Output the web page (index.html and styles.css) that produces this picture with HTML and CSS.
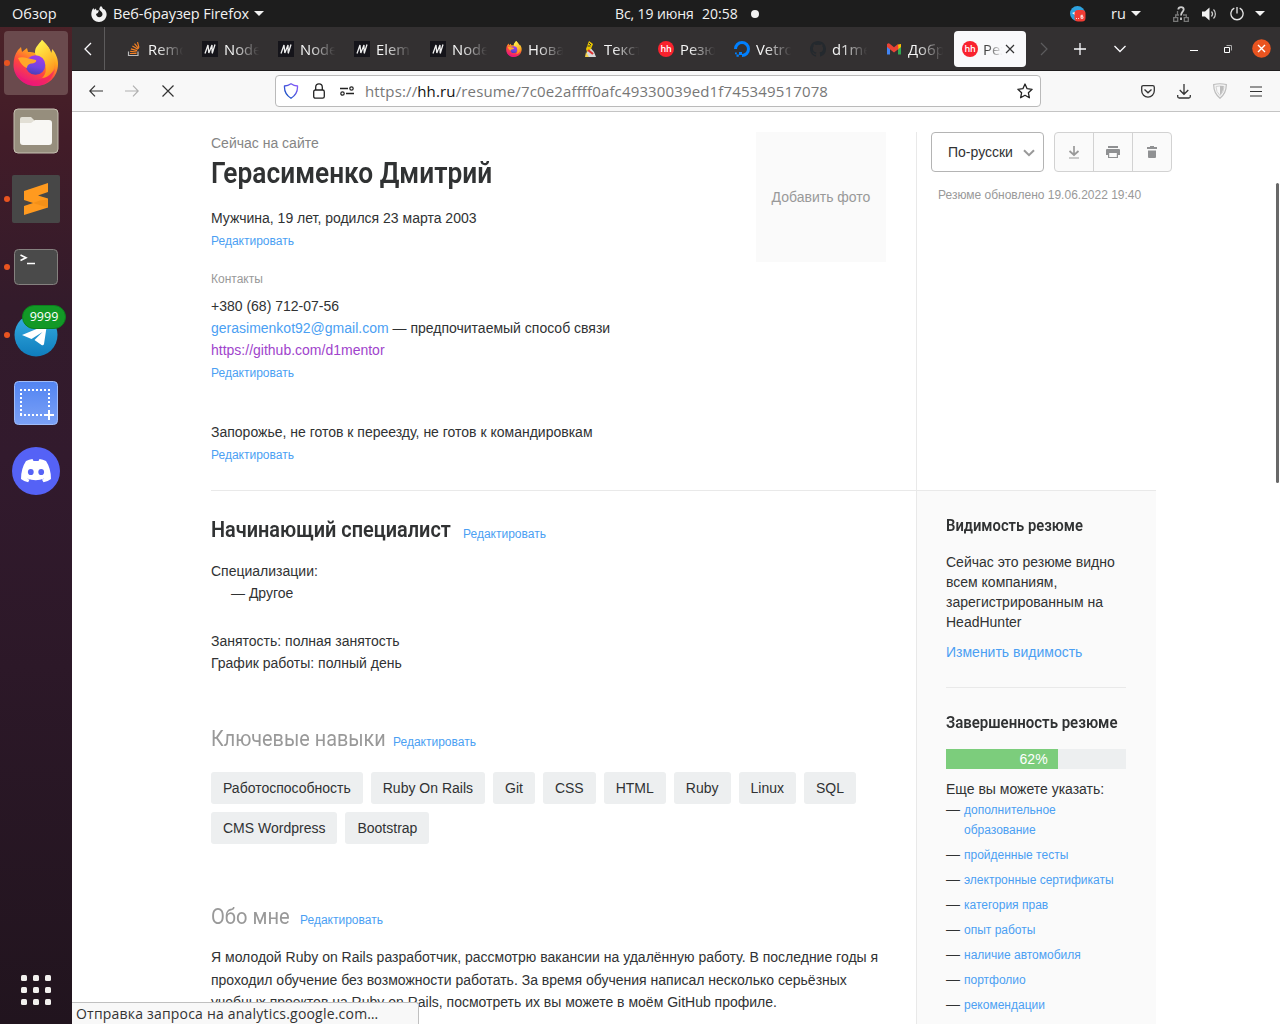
FILE: index.html
```html
<!DOCTYPE html>
<html lang="ru">
<head>
<meta charset="utf-8">
<title>Герасименко Дмитрий</title>
<link rel="stylesheet" href="styles.css">
</head>
<body>
<svg width="0" height="0" class="defs">
  <defs>
    <linearGradient id="fxBody" x1="0.8" y1="0" x2="0.3" y2="1"><stop offset="0" stop-color="#fff44f"/><stop offset="0.35" stop-color="#ffa61e"/><stop offset="0.65" stop-color="#ff4540"/><stop offset="1" stop-color="#e3128a"/></linearGradient>
    <linearGradient id="fxTail" x1="0.3" y1="0" x2="0.7" y2="1"><stop offset="0" stop-color="#fff44f"/><stop offset="0.5" stop-color="#ffc531"/><stop offset="1" stop-color="#ff8a1c"/></linearGradient>
    <linearGradient id="fxGlobe" x1="0.6" y1="0" x2="0.4" y2="1"><stop offset="0" stop-color="#a63be8"/><stop offset="0.6" stop-color="#7244e0"/><stop offset="1" stop-color="#4a3fb5"/></linearGradient>
    <linearGradient id="tgFill" x1="0" y1="0" x2="0" y2="1"><stop offset="0" stop-color="#37aee2"/><stop offset="1" stop-color="#0f7dbd"/></linearGradient>
    <linearGradient id="shotFill" x1="0" y1="0" x2="0" y2="1"><stop offset="0" stop-color="#5284f2"/><stop offset="1" stop-color="#7ba1f6"/></linearGradient>
    <linearGradient id="shieldLine" x1="1" y1="0" x2="0" y2="1"><stop offset="0" stop-color="#9059ff"/><stop offset="1" stop-color="#0250bb"/></linearGradient>
    <symbol id="firefox" viewBox="0 0 46 46">
      <path d="M29 0c5 5 8 8 9 13 1-2 1-3 1-4 4 4 6 10 6 15C45 37 35 46 23 46S.5 37 .5 25C.5 19 2 14 5 10l3-3 1 5 5-4 1 4c3 0 5 .3 7 1z" fill="url(#fxBody)"/>
      <path d="M29 0c4 4 8 8 9 13 3 5 4 10 3 15-2 7-8 10-12 10 5-4 5-12 1-17-3-3-8-4-8-9 0-5 4-8 7-12z" fill="url(#fxTail)"/>
      <circle cx="22.500" cy="25" r="9.800" fill="url(#fxGlobe)"/>
      <path d="M5 18c4-2 9 0 18 2 1 2-2 3.500-5 3.500-3 1-4 2-4 4.500C9 26 7 22 5 18z" fill="#ffa72a"/>
      <path d="M2 31c5 8 14 11 22 9 8-1 14-5 18-11-2 9-9 17-19 17C13 46 5 40 2 31z" fill="#ee1573" opacity=".55"/>
    </symbol>
    <symbol id="mdn" viewBox="0 0 16 16"><path d="M0 0h16v16H0z" fill="#15141a"/><path d="M3 12.500L6 4l.8 8L10 4l.2 8M10.200 12.500L13 3.500" fill="none" stroke="#eee" stroke-width="1.300"/></symbol>
    <symbol id="caret" viewBox="0 0 10 5"><path d="M0 0h10L5 5z" fill="#f2f2f2"/></symbol>
  </defs>
</svg>

<header class="topbar">
  <span class="topbar-item overview"><span class="fit">Обзор</span></span>
  <span class="topbar-item app-menu">
    <svg width="16" height="16" viewBox="0 0 16 16"><path d="M10 0c1 1 1.800 2 2 3l1.300.3C15 5 15.800 7 15.600 9c-.5 4-3.600 7-7.600 7S.500 13 .300 8.500C.300 6 1 3.500 2.500 2l.5 1.800L5 2.600l.3 1.700 2.700.2L6.800 7 5 8c.2 2 1.500 3.200 3.200 3.200 2 0 3.400-1.500 3.300-3.300C11.300 6 9 5 8.300 3.500 8.300 2 9 .800 10 0z" fill="#f2f2f2"/></svg>
    <span class="fit">Веб-браузер Firefox</span>
    <svg width="10" height="5"><use href="#caret"/></svg>
  </span>
  <span class="topbar-item clock"><span class="date">Вс, 19 июня</span><span>20:58</span><i class="notify"></i></span>
  <span class="topbar-item status">
    <svg class="tray-tg" width="16" height="16" viewBox="0 0 16 16"><circle cx="7.500" cy="7.500" r="7.500" fill="#2ea2de"/><path d="M2 7l3-1v3z" fill="#fff"/><rect x="4.500" y="4" width="11" height="11.500" rx="3.500" fill="#f23c34"/><path d="M6 12.500h1m1 0h1" stroke="#fff" stroke-width=".8"/><path d="M13 9.300h-2v3h2v-1.700h-2" fill="none" stroke="#fff" stroke-width=".8"/></svg>
    <span class="lang">ru</span>
    <svg class="lang-caret" width="10" height="5"><use href="#caret"/></svg>
    <svg class="net" width="16" height="16" viewBox="0 0 16 16"><path d="M.700 11.700h4v3.600h-4zM11.300 11.700h4v3.600h-4zM4.500 5v3.500M2.700 11V9H6M10 9h3.300v2" fill="none" stroke="#777" stroke-width="1.300"/><path d="M5.300 3.500C5.500.300 10.700.300 10.700 3.500 10.700 5.500 8 6 8 9.500M8 11.500v2.500" fill="none" stroke="#ccc" stroke-width="1.800"/></svg>
    <svg class="vol" width="16" height="14" viewBox="0 0 16 14"><path d="M0 4.500h3L7.500.500v13L3 9.500H0z" fill="#f2f2f2"/><path d="M9.500 4.500c1.300 1.500 1.300 3.500 0 5M11.500 2.500c2.500 2.500 2.500 6.500 0 9" fill="none" stroke="#ccc" stroke-width="1.200"/></svg>
    <svg class="power" width="14" height="14" viewBox="0 0 14 14"><path d="M4.300 1.200a6.100 6.100 0 1 0 5.400 0M7 0v6.500" fill="none" stroke="#e8e8e8" stroke-width="1.300"/></svg>
    <svg width="10" height="5"><use href="#caret"/></svg>
  </span>
</header>

<div class="desktop">
  <nav class="dock">
    <div class="dock-item current"><i class="dot"></i><svg width="46" height="46"><use href="#firefox"/></svg></div>
    <div class="dock-item"><svg width="46" height="46" viewBox="0 0 46 46"><rect x="1" y="1" width="44" height="44" rx="4" fill="#968e7d" stroke="#c6c0b2"/><path d="M7 14v-3q0-2 2-2h9l4 4v6H7z" fill="#e2dfd5"/><path d="M7 15h11l4-3h14q3 0 3 3v19q0 3-3 3H10q-3 0-3-3z" fill="#f8f7f4"/></svg></div>
    <div class="dock-item"><i class="dot"></i><svg width="48" height="48" viewBox="0 0 48 48"><rect width="48" height="48" rx="2" fill="#474747"/><path d="M12 16l24-8v9l-10 3.500L36 23.500v9L12 40v-9l9-3-9-3z" fill="#ff9a1f"/><path d="M21 28l7-2.500 8 -1v8z" fill="#e98512" opacity=".5"/></svg></div>
    <div class="dock-item"><i class="dot"></i><svg width="44" height="36" viewBox="0 0 44 36"><rect x=".5" y=".5" width="43" height="35" rx="4" fill="#4a4a4a" stroke="#85817f"/><path d="M6.500 6l5.500 2.800L6.500 11.500M13 14.500h8" fill="none" stroke="#fff" stroke-width="1.600"/></svg></div>
    <div class="dock-item"><i class="dot"></i><svg width="44" height="44" viewBox="0 0 44 44"><circle cx="22" cy="22" r="21.500" fill="url(#tgFill)"/><path d="M8 22L31 12.500q2-.5 1.500 2L30 31q-.6 2-2.500 1l-7-5 8-8-11 7z" fill="#fff"/></svg><b class="badge">9999</b></div>
    <div class="dock-item"><svg width="44" height="44" viewBox="0 0 44 44"><rect x=".5" y=".5" width="43" height="43" rx="4" fill="url(#shotFill)" stroke="#9fbcfa"/><path d="M6 9h30M6 34h22" fill="none" stroke="#fff" stroke-width="2" stroke-dasharray="2 2"/><path d="M7 12v22M35 8v20" fill="none" stroke="#fff" stroke-width="2" stroke-dasharray="2 2"/><path d="M35 29v10M30 34h10" stroke="#fff" stroke-width="2"/></svg></div>
    <div class="dock-item"><svg width="48" height="48" viewBox="0 0 48 48"><circle cx="24" cy="24" r="24" fill="#5562f6"/><path d="M14 14q3-1.500 6.500-2l1 2h5l1-2q3.500.5 6.500 2 5 7.500 5 18-3 2.500-7.500 3.200l-1.600-2.600q1.300-.4 2.400-1.200-8.600 3.600-17.200 0 1.100.8 2.400 1.200L16.200 35.200Q12 34.500 9 32 9 21.500 14 14z" fill="#fff"/><ellipse cx="18.800" cy="25" rx="2.900" ry="3.100" fill="#5562f6"/><ellipse cx="29.200" cy="25" rx="2.900" ry="3.100" fill="#5562f6"/></svg></div>
    <div class="apps"><i></i><i></i><i></i><i></i><i></i><i></i><i></i><i></i><i></i></div>
  </nav>

  <main class="browser">
    <div class="tabs">
      <div class="scroll-left"><svg width="8" height="14" viewBox="0 0 8 14"><path d="M7 1L1 7l6 6" fill="none" stroke="#fbfbfe" stroke-width="1.300"/></svg></div>
      <div class="tab"><svg width="16" height="16" viewBox="0 0 16 16"><path d="M2.500 10.500V14.500H12V10.500" fill="none" stroke="#bcbbbb" stroke-width="1.200"/><path d="M4 12.500h6.500M4.200 10.300l6.400.7M4.900 7.800l6.200 1.800M6.400 5l5.500 3.300M8.500 2.700l4.200 5M11.500 1.200l1.500 5.500" stroke="#f48024" stroke-width="1.200"/></svg><span>Remo</span></div>
      <div class="tab"><svg width="16" height="16"><use href="#mdn"/></svg><span>Node</span></div>
      <div class="tab"><svg width="16" height="16"><use href="#mdn"/></svg><span>Node</span></div>
      <div class="tab"><svg width="16" height="16"><use href="#mdn"/></svg><span>Elem</span></div>
      <div class="tab"><svg width="16" height="16"><use href="#mdn"/></svg><span>Node</span></div>
      <div class="tab"><svg width="16" height="16"><use href="#firefox"/></svg><span>Нова</span></div>
      <div class="tab"><svg width="16" height="16" viewBox="0 0 16 16"><path d="M7 5l5 6 2 5H4l1-6z" fill="#d8d8d8"/><path d="M7 0l4 3-2 5-4 3-1-3z" fill="#e8c500"/><path d="M7 2l2 2M5.500 5h3" stroke="#333"/><path d="M6 9l5 4" stroke="#d33" stroke-width="2.200"/><path d="M4 11l3 5H3z" fill="#f3d24a"/></svg><span>Текст</span></div>
      <div class="tab"><i class="hh">hh</i><span>Резю</span></div>
      <div class="tab"><svg width="16" height="16" viewBox="0 0 16 16"><path d="M1.500 8a6.500 6.500 0 1 1 6.500 6.500" fill="none" stroke="#0080ff" stroke-width="3"/><path d="M5 11h3v3H5zM2.500 13.500h2.300v2.300H2.500zM1 11.500h1.800v1.800H1z" fill="#0080ff"/></svg><span>Vetro</span></div>
      <div class="tab"><svg width="16" height="16" viewBox="0 0 16 16"><path d="M8 0C3.580 0 0 3.580 0 8c0 3.540 2.290 6.530 5.470 7.590.4.070.55-.17.55-.38v-1.490c-2.230.48-2.700-1.070-2.700-1.070-.36-.92-.89-1.170-.89-1.170-.73-.5.060-.49.060-.49.800.060 1.230.83 1.230.83.72 1.220 1.870.87 2.330.66.070-.52.280-.87.500-1.070-1.780-.2-3.640-.89-3.640-3.950 0-.87.310-1.590.82-2.150-.08-.2-.36-1.020.08-2.120 0 0 .67-.21 2.200.82a7.600 7.600 0 0 1 4 0c1.530-1.040 2.200-.82 2.200-.82.44 1.100.16 1.920.08 2.120.51.560.82 1.270.82 2.150 0 3.070-1.870 3.750-3.650 3.950.29.250.54.730.54 1.480v2.200c0 .21.150.46.550.38A8 8 0 0 0 16 8c0-4.420-3.580-8-8-8z" fill="#24292e"/></svg><span>d1me</span></div>
      <div class="tab"><svg width="16" height="16" viewBox="0 0 16 16"><path d="M1 3v10.500h3V7z" fill="#4285f4"/><path d="M15 3v10.500h-3V7z" fill="#34a853"/><path d="M12 3.500L15 3v3l-3 2.500z" fill="#fbbc04"/><path d="M1 3.200Q2.500 1.500 4 3l4 3.200L12 3l.5 5L8 11.500 1 6z" fill="#ea4335"/></svg><span>Добро</span></div>
      <div class="tab active"><i class="hh">hh</i><span>Резю</span><svg class="close" width="10" height="10" viewBox="0 0 10 10"><path d="M1 1l8 8M9 1L1 9" stroke="#333" stroke-width="1.200"/></svg></div>
      <div class="tab-tools">
        <svg width="8" height="14" viewBox="0 0 8 14"><path d="M1 1l6 6-6 6" fill="none" stroke="#5d5c5e" stroke-width="1.200"/></svg>
        <svg width="12" height="12" viewBox="0 0 12 12"><path d="M6 0v12M0 6h12" stroke="#fbfbfe" stroke-width="1.300"/></svg>
        <svg width="12" height="8" viewBox="0 0 12 8"><path d="M.500 1L6 6.500 11.500 1" fill="none" stroke="#fbfbfe" stroke-width="1.300"/></svg>
        <svg class="min" width="8" height="6" viewBox="0 0 8 6"><path d="M0 4.500h8" stroke="#fff"/></svg>
        <svg class="restore" width="8" height="8" viewBox="0 0 8 8"><path d="M.500 2.500h5v5h-5z" fill="none" stroke="#fff"/><path d="M2.500.500h5v5" fill="none" stroke="#aaa"/></svg>
        <svg class="quit" width="19" height="19" viewBox="0 0 19 19"><circle cx="9.500" cy="9.500" r="9.300" fill="#e95420"/><path d="M6 6l7 7M13 6l-7 7" stroke="#fff" stroke-width="1.400"/></svg>
      </div>
    </div>

    <div class="toolbar">
      <div class="nav-buttons">
        <svg width="14" height="12" viewBox="0 0 14 12"><path d="M14 6H1M6 .700L.800 6 6 11.300" fill="none" stroke="#333" stroke-width="1.200"/></svg>
        <svg width="14" height="12" viewBox="0 0 14 12"><path d="M0 6h13M8 .700L13.200 6 8 11.300" fill="none" stroke="#b0b0b0" stroke-width="1.200"/></svg>
        <svg class="stop" width="12" height="12" viewBox="0 0 12 12"><path d="M.500.500l11 11M11.500.500l-11 11" stroke="#333" stroke-width="1.200"/></svg>
      </div>
      <div class="urlbar">
        <svg width="16" height="16" viewBox="0 0 16 16"><path d="M8 .800q3 2 6.500 2.200Q15 11 8 15.300 1 11 1.500 3 5 2.800 8 .800z" fill="none" stroke="url(#shieldLine)" stroke-width="1.300"/></svg>
        <svg width="12" height="16" viewBox="0 0 12 16"><rect x=".7" y="7" width="10.600" height="8.200" rx="1.700" fill="none" stroke="#222" stroke-width="1.300"/><path d="M2.700 7V4.200q0-3.300 3.300-3.300t3.300 3.300V7" fill="none" stroke="#222" stroke-width="1.300"/></svg>
        <svg class="perms" width="14" height="10" viewBox="0 0 14 10"><path d="M0 2.500h8M6 7.500h8" stroke="#222" stroke-width="1.300"/><circle cx="11.500" cy="2.500" r="1.700" fill="none" stroke="#222" stroke-width="1.200"/><circle cx="2.500" cy="7.500" r="1.700" fill="none" stroke="#222" stroke-width="1.200"/></svg>
        <span class="url">https://<b>hh.ru</b>/resume/7c0e2affff0afc49330039ed1f745349517078</span>
        <svg class="star" width="16" height="16" viewBox="0 0 16 16"><path d="M8 1l2.100 4.700 5 .6-3.700 3.500 1 5L8 12.300l-4.400 2.500 1-5L.900 6.300l5-.6z" fill="none" stroke="#222" stroke-width="1.300" stroke-linejoin="round"/></svg>
      </div>
      <div class="tool-buttons">
        <svg width="14" height="13" viewBox="0 0 14 13"><path d="M2.200.700h9.600q1.500 0 1.500 1.500v3.600a6.300 6.300 0 0 1-12.600 0V2.200Q.700.700 2.200.700zM3.500 4.500L7 7.800l3.500-3.300" fill="none" stroke="#333" stroke-width="1.300"/></svg>
        <svg width="14" height="15" viewBox="0 0 14 15"><path d="M7 0v10M2.700 6L7 10.300 11.300 6M.700 11v1.500q0 1.500 1.500 1.500h9.600q1.500 0 1.500-1.500V11" fill="none" stroke="#333" stroke-width="1.300"/></svg>
        <svg width="14" height="16" viewBox="0 0 14 16"><path d="M.700 1.500q6.300-1.500 12.600 0Q13.500 10 7 15.200.500 10 .700 1.500z" fill="#f4f4f4" stroke="#bdbdbd" stroke-width="1.200"/><path d="M3 3.500q4-1 8 0Q11 9 7 12.500 3 9 3 3.500z" fill="#f8f8f8" stroke="#c9c9c9" stroke-width=".8"/><path d="M7 3h3.500Q10.500 8.500 7 12z" fill="#bdbdbd"/></svg>
        <svg class="menu" width="12" height="11" viewBox="0 0 12 11"><path d="M0 1h12M0 5.500h12M0 10h12" stroke="#333" stroke-width="1.200"/></svg>
      </div>
    </div>

    <div class="page">
      <div class="row intro">
        <section class="person">
          <div class="about">
            <p class="muted">Сейчас на сайте</p>
            <h1><span class="fit">Герасименко Дмитрий</span></h1>
            <p>Мужчина, 19 лет, родился 23 марта 2003</p>
            <a class="edit">Редактировать</a>
            <p class="label">Контакты</p>
            <p>+380 (68) 712-07-56</p>
            <p><a>gerasimenkot92@gmail.com</a> — предпочитаемый способ связи</p>
            <p><a class="visited">https://github.com/d1mentor</a></p>
            <a class="edit">Редактировать</a>
            <p class="location">Запорожье, не готов к переезду, не готов к командировкам</p>
            <a class="edit">Редактировать</a>
          </div>
          <div class="photo">Добавить фото</div>
        </section>
        <aside class="actions">
          <div class="action-row">
            <button class="select">По-русски<svg width="12" height="8" viewBox="0 0 12 8"><path d="M1 1.200l5 5 5-5" fill="none" stroke="#999" stroke-width="2"/></svg></button>
            <div class="group">
              <span><svg width="12" height="13" viewBox="0 0 12 13"><path d="M6 0v9M1.500 5L6 9l4.500-4" fill="none" stroke="#999" stroke-width="1.700"/><path d="M1 12h10" stroke="#999"/></svg></span>
              <span><svg width="14" height="12" viewBox="0 0 14 12"><path d="M2 0h10v2H2zM1 3h12q1 0 1 1v5h-2V6H2v3H0V4q0-1 1-1z" fill="#8f9092"/><path d="M2.600 6.500h8.800v5H2.600z" fill="none" stroke="#8f9092" stroke-width="1.200"/></svg></span>
              <span><svg width="10" height="12" viewBox="0 0 10 12"><path d="M0 1h3V0h4v1h3v2H0zM1 4.500h8V11q0 1-1 1H2q-1 0-1-1z" fill="#909193"/></svg></span>
            </div>
          </div>
          <p class="updated">Резюме обновлено 19.06.2022 19:40</p>
        </aside>
      </div>

      <div class="row">
        <section class="content">
          <div class="title"><h2 class="position"><span class="fit">Начинающий специалист</span></h2><a class="edit">Редактировать</a></div>
          <p>Специализации:</p>
          <p class="indent">— Другое</p>
          <p class="spaced">Занятость: полная занятость</p>
          <p>График работы: полный день</p>

          <div class="title skills-title"><h2 class="skills-head"><span class="fit">Ключевые навыки</span></h2><a class="edit">Редактировать</a></div>
          <div class="chips"><span>Работоспособность</span><span>Ruby On Rails</span><span>Git</span><span>CSS</span><span>HTML</span><span>Ruby</span><span>Linux</span><span>SQL</span><span>CMS Wordpress</span><span>Bootstrap</span></div>

          <div class="title me-title"><h2 class="me-head"><span class="fit">Обо мне</span></h2><a class="edit">Редактировать</a></div>
          <p class="bio">Я молодой Ruby on Rails разработчик, рассмотрю вакансии на удалённую работу. В последние годы я проходил обучение без возможности работать. За время обучения написал несколько серьёзных учебных проектов на Ruby on Rails, посмотреть их вы можете в моём GitHub профиле.</p>
        </section>
        <aside class="side">
          <h3 class="vis"><span class="fit">Видимость резюме</span></h3>
          <p>Сейчас это резюме видно всем компаниям, зарегистрированным на HeadHunter</p>
          <a class="change">Изменить видимость</a>
          <hr>
          <h3 class="done"><span class="fit">Завершенность резюме</span></h3>
          <div class="progress"><div class="progress-fill" style="width:62%">62%</div></div>
          <p>Еще вы можете указать:</p>
          <ul>
            <li><a>дополнительное образование</a></li>
            <li><a>пройденные тесты</a></li>
            <li><a>электронные сертификаты</a></li>
            <li><a>категория прав</a></li>
            <li><a>опыт работы</a></li>
            <li><a>наличие автомобиля</a></li>
            <li><a>портфолио</a></li>
            <li><a>рекомендации</a></li>
          </ul>
        </aside>
      </div>
      <div class="scrollbar"></div>
      <div class="statusbar"><span class="fit">Отправка запроса на analytics.google.com…</span></div>
    </div>
  </main>
</div>
</body>
</html>
```
FILE: styles.css
```css
* { box-sizing: border-box; }
body { margin: 0; width: 1280px; height: 1024px; overflow: hidden; display: flex; flex-direction: column; background: #fff; color: #303233; font: 14px/22px "Liberation Sans", Arial, sans-serif; }
p, h1, h2, h3, ul { margin: 0; padding: 0; }
svg { display: block; flex: none; }
.defs { position: absolute; }
.fit { display: inline-block; white-space: nowrap; transform-origin: 0 50%; }

.topbar { position: relative; flex: none; height: 27px; background: #1d1d1d; color: #f2f2f2; font: 14.500px/27px "Open Sans", "Noto Sans", sans-serif; display: flex; justify-content: space-between; }
.topbar-item { display: flex; align-items: center; white-space: nowrap; }
.overview { width: 91px; padding-left: 12px; }
.app-menu { width: 524px; }
.app-menu svg:first-child { margin-right: 6px; }
.app-menu .fit { width: 141px; letter-spacing: -.09px; }
.clock { width: 455px; font-size: 14px; }
.date { width: 87px; letter-spacing: -.1px; }
.notify { width: 8px; height: 8px; border-radius: 50%; background: #f2f2f2; margin-left: 13px; }
.status { width: 210px; }
.lang { margin-left: 25px; width: 20px; }
.net { margin-left: 32px; }
.vol { margin-left: 13px; }
.power { margin: 0 11px 0 12px; }

.desktop { flex: 1; min-height: 0; display: flex; }
.dock { position: relative; flex: none; width: 72px; padding: 4px; background: linear-gradient(#4b2228 0, #421c28 110px, #331b2b 280px, #321a2d 430px, #2c1828 640px, #21141e 100%); display: flex; flex-direction: column; gap: 4px; }
.dock-item { position: relative; width: 64px; height: 64px; display: flex; align-items: center; justify-content: center; border-radius: 4px; }
.current { background: #6a4a4d; }
.dot { position: absolute; left: 0; top: 29px; width: 6px; height: 6px; border-radius: 50%; background: #e95420; }
.badge { position: absolute; left: 18px; top: 2px; width: 44px; height: 24px; border-radius: 12px; background: #129926; border: 1px solid #0c7f1d; color: #fff; font: 12.500px/21px "Open Sans", sans-serif; text-align: center; }
.apps { margin: auto auto 15px; display: grid; grid-template-columns: repeat(3, 6px); gap: 6px; }
.apps i { width: 6px; height: 6px; border-radius: 1.500px; background: #f2f0ee; }

.browser { flex: 1; min-width: 0; display: flex; flex-direction: column; }
.tabs { flex: none; height: 44px; background: #333031; border-bottom: 1px solid #1f1d1e; display: flex; align-items: center; font: 14.800px/22px "Open Sans", "Noto Sans", sans-serif; color: #f6f6f6; }
.scroll-left { width: 33px; height: 43px; border-right: 1px solid #5d5b5c; display: flex; align-items: center; padding-left: 12px; margin-right: 21px; }
.tab { width: 76px; display: flex; align-items: center; gap: 6px; overflow: hidden; white-space: nowrap; }
.tab span { width: 36px; overflow: hidden; -webkit-mask-image: linear-gradient(90deg, #000 25%, transparent 98%); mask-image: linear-gradient(90deg, #000 25%, transparent 98%); }
.hh { flex: none; width: 16px; height: 16px; border-radius: 50%; background: #f9222e; color: #fff; font: 600 9px/15px "Open Sans", sans-serif; text-align: center; letter-spacing: -.3px; }
.tab.active { width: 72px; height: 36px; margin-left: -8px; padding-left: 8px; gap: 5px; border-radius: 4px; background: #f9f9fb; color: #444; }
.tab.active span { width: 20px; }
.close { margin-left: -3px; }
.tab-tools { flex: 1; display: flex; align-items: center; padding-left: 14px; }
.tab-tools svg:nth-child(2) { margin-left: 26px; }
.tab-tools svg:nth-child(3) { margin-left: 28px; }
.tab-tools .min { margin-left: 64px; align-self: center; }
.restore { margin-left: 26px; }
.quit { margin-left: 20px; }

.toolbar { flex: none; height: 41px; background: #f8f8f8; border-bottom: 1px solid #c4c4c4; display: flex; align-items: center; }
.nav-buttons { width: 203px; padding-left: 17px; display: flex; gap: 22px; }
.stop { margin-left: 1px; }
.urlbar { width: 766px; height: 32px; border: 1px solid #bababa; border-radius: 4px; background: #fff; display: flex; align-items: center; padding-left: 7px; gap: 14px; }
.perms { margin-left: 1px; }
.url { flex: 1; margin-left: -3px; color: #777; font: 15px/22px "Open Sans", "Noto Sans", sans-serif; letter-spacing: .14px; white-space: nowrap; }
.url b { font-weight: 400; color: #111; }
.star { margin-right: 7px; }
.tool-buttons { display: flex; align-items: center; gap: 22px; padding-left: 100px; }
.menu { margin-left: 1px; }

.page { position: relative; flex: 1; min-height: 0; overflow: hidden; background: #fff; padding: 20px 0 0 139px; }
.row { display: flex; }
.intro { height: 359px; }
.person { width: 706px; display: flex; border-right: 1px solid #e9e9e9; border-bottom: 1px solid #e9e9e9; }
.about { width: 545px; }
a { color: #4b9ff3; }
.visited { color: #a044cc; }
.muted { color: #858585; }
h1 { height: 53px; padding-top: 1px; font: 600 30px/36px Roboto, sans-serif; }
h1 .fit { transform: scaleX(.877); }
.edit { display: block; font-size: 12px; line-height: 24px; }
.label { margin: 15px 0 5px; color: #999; font-size: 12px; }
.location { margin-top: 36px; }
.photo { width: 130px; height: 130px; background: #fafafa; color: #999; line-height: 130px; text-align: center; }
.actions { width: 239px; border-bottom: 1px solid #e9e9e9; }
.action-row { display: flex; gap: 10px; padding-left: 14px; width: 256px; }
.select { width: 113px; height: 40px; padding: 0 8px 0 16px; border: 1px solid #b4b4b4; border-radius: 4px; background: #fff; color: #303233; font: inherit; display: flex; align-items: center; justify-content: space-between; }
.select svg { margin-top: 2px; }
.group { flex: none; width: 118px; height: 40px; border: 1px solid #d2d2d2; border-radius: 4px; background: #fafafa; display: flex; }
.group span { flex: 1; display: flex; align-items: center; justify-content: center; }
.group span + span { border-left: 1px solid #d2d2d2; }
.updated { padding-left: 21px; margin-top: 12px; font-size: 12px; color: #999; white-space: nowrap; }

.content { width: 706px; height: 534px; border-right: 1px solid #e9e9e9; }
.title { height: 69px; padding-top: 24px; display: flex; align-items: flex-start; }
.title .edit { margin-top: 7px; }
h2 { margin-right: 10px; font: 600 22px/30px Roboto, sans-serif; }
.position { width: 242px; }
.position .fit { transform: scaleX(.904); }
.indent { padding-left: 20px; }
.spaced { margin-top: 26px; }
.skills-title { height: 98px; padding-top: 49px; }
.skills-head { width: 172px; }
.skills-head .fit { transform: scaleX(.9); }
.skills-head, .me-head { padding-top: 1px; color: #999; font-weight: 400; }
.chips { display: flex; flex-wrap: wrap; gap: 8px; width: 675px; }
.chips span { height: 32px; padding: 0 12px; border-radius: 3px; background: #edeff0; line-height: 32px; }
.me-title { height: 102px; padding-top: 57px; }
.me-head { width: 79px; }
.me-head .fit { transform: scaleX(.915); }
.bio { width: 675px; padding-top: .300px; line-height: 22.400px; }
.side { width: 239px; height: 534px; padding: 23px 30px 0 29px; background: #fafafa; line-height: 20px; }
h3 { height: 38px; font: 600 16px/24px Roboto, sans-serif; }
.vis .fit { transform: scaleX(.924); }
.done .fit { transform: scaleX(.938); }
.change { display: block; margin-top: 10px; }
hr { height: 1px; border: 0; margin: 25px 0 23px; background: #e9e9e9; }
.progress { height: 20px; margin-bottom: 10px; background: #edeff0; }
.progress-fill { height: 20px; padding-right: 10px; background: #7ccd7c; color: #fff; text-align: right; }
.side ul { padding-top: 1px; list-style: none; }
.side li { margin-bottom: 5px; padding-left: 18px; font-size: 12px; line-height: 20px; }
.side li::before { content: "—"; float: left; margin: -1px 0 0 -18px; font-size: 14px; }
.scrollbar { position: absolute; right: 1px; top: 71px; width: 3px; height: 300px; border-radius: 2px; background: #686868; }
.statusbar { position: absolute; left: 0; bottom: 0; width: 347px; height: 22px; padding-left: 4px; background: #f8f8f8; border: solid #c0c0c0; border-width: 1px 1px 0 0; border-radius: 0 3px 0 0; color: #333; font: 14px/21px "Open Sans", "Noto Sans", sans-serif; letter-spacing: .2px; white-space: nowrap; }
```
